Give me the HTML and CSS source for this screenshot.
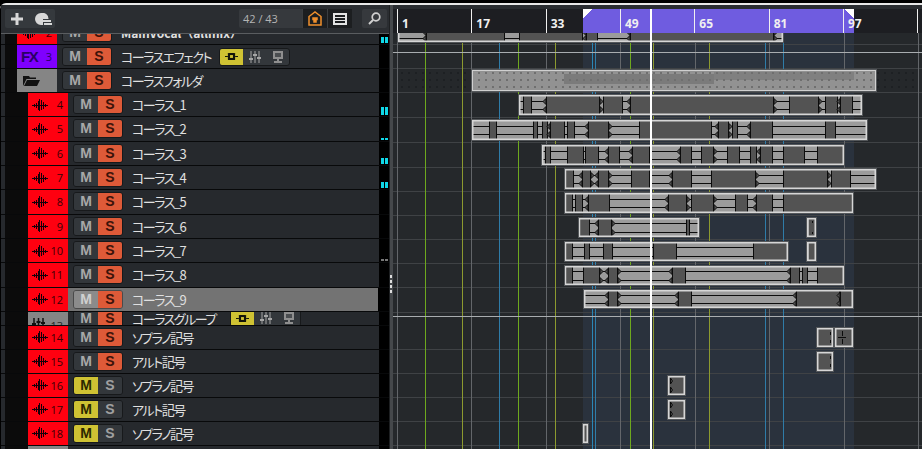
FILE: index.html
```html
<!DOCTYPE html>
<html lang="ja">
<head>
    <meta charset="UTF-8">
    <title>Project</title>
    <link rel="stylesheet" href="styles.css">
</head>
<body>
    <svg class="defs" width="0" height="0">
        <symbol id="wave" viewBox="0 0 16 12">
            <path d="M0 6.500h16M2.500 5v3M4.500 4v5M6.500 2v9M7.500 0v12M9.500 1v10M11.500 3v7M13.500 5v3" stroke="#14000a" stroke-width="1" fill="none"/>
        </symbol>
        <symbol id="chan" viewBox="0 0 18 12">
            <rect x="4" y="1" width="10" height="10" rx="1" fill="#14150a"/>
            <rect x="7" y="4" width="4" height="4" fill="#cfc233"/>
            <path d="M0 6h4M14 6h4" stroke="#14150a" stroke-width="1.500"/>
        </symbol>
        <symbol id="faders" viewBox="0 0 12 12">
            <path d="M2 0v12M6 0v12M10 0v12" stroke="#a5a5a5"/>
            <path d="M0 7h4v2H0zM4 3h4v2H4zM8 6h4v2H8z" fill="#a5a5a5"/>
        </symbol>
        <symbol id="screen" viewBox="0 0 12 12">
            <path d="M1 0h10v8H1zM5 8h2v2H5zM2 10h8v2H2z" fill="#8f8f8f"/>
            <path d="M3 2h6v4H3z" fill="#4a4d50"/>
        </symbol>
    </svg>

    <div class="app">
        <div class="tracks">
            <div class="toolbar">
                <div class="tool-group">
                    <svg width="12" height="12" viewBox="0 0 12 12"><path d="M4.500 0h3v4.500H12v3H7.500V12h-3V7.500H0v-3h4.500z" fill="#d8d8d8"/></svg>
                    <svg width="17" height="12" viewBox="0 0 17 12"><path d="M6 0a6 6 0 0 0 0 12h2V9h8V7H8V6h5.500A6 6 0 0 0 6 0zM9 10h8v2H9z" fill="#d8d8d8"/></svg>
                </div>
                <div class="counter">
                    <span class="count-text">42 / 43</span>
                    <span class="count-btn">
                        <svg width="14" height="15" viewBox="0 0 14 15"><path d="M1 14V5.500L7 1l6 4.500V14zM5 7h1.500v1.500H5zM7.500 7H9v1.500H7.500zM6 9.500h2V11H6z" fill="none" stroke="#f0902c" stroke-width="1.500"/></svg>
                    </span>
                    <span class="count-btn">
                        <svg width="14" height="12" viewBox="0 0 14 12"><path d="M0 0h14v12H0zM2 2v2h10V2zM2 5v2h10V5zM2 8v2h10V8z" fill="#e4e4e4" fill-rule="evenodd"/></svg>
                    </span>
                </div>
                <div class="search-btn">
                    <svg width="13" height="13" viewBox="0 0 13 13"><circle cx="8" cy="5" r="3.800" fill="none" stroke="#d0d0d0" stroke-width="1.700"/><path d="M5 8l-4 4" stroke="#d0d0d0" stroke-width="2"/></svg>
                </div>
            </div>

            <div class="list">
                <div class="row row-cut">
                    <span class="gutter"></span>
                    <span class="strip red"><svg class="wave"><use href="#wave"/></svg><b class="num">2</b></span>
                    <span class="ms"><i class="m">M</i><i class="s">S</i></span>
                    <span class="name bold">MainVocal（allmix）</span>
                    <span class="meter"><i class="lit h6"></i></span>
                </div>
                <div class="row">
                    <span class="gutter"></span>
                    <span class="strip purple"><span class="fx">FX</span><b class="num">3</b></span>
                    <span class="ms"><i class="m">M</i><i class="s">S</i></span>
                    <span class="name name-fixed">コーラスエフェクト</span>
                    <span class="chips">
                        <i class="chip on"><svg width="13" height="9"><use href="#chan"/></svg></i>
                        <i class="chip"><svg width="12" height="12"><use href="#faders"/></svg></i>
                        <i class="chip"><svg width="12" height="12"><use href="#screen"/></svg></i>
                    </span>
                    <span class="meter"></span>
                </div>
                <div class="row">
                    <span class="gutter"></span>
                    <span class="strip grey">
                        <svg class="folder" width="17" height="11" viewBox="0 0 17 11"><path d="M0 1h6l1 1.500h6V4H3.500L0 11zM4 5h13l-3 6H1z" fill="#111"/></svg>
                    </span>
                    <span class="ms"><i class="m">M</i><i class="s">S</i></span>
                    <span class="name">コーラスフォルダ</span>
                    <span class="meter"></span>
                </div>
                <div class="row sub">
                    <span class="gutter"></span>
                    <span class="strip red"><svg class="wave"><use href="#wave"/></svg><b class="num">4</b></span>
                    <span class="ms"><i class="m">M</i><i class="s">S</i></span>
                    <span class="name">コーラス_1</span>
                    <span class="meter"><i class="lit h8"></i></span>
                </div>
                <div class="row sub">
                    <span class="gutter"></span>
                    <span class="strip red"><svg class="wave"><use href="#wave"/></svg><b class="num">5</b></span>
                    <span class="ms"><i class="m">M</i><i class="s">S</i></span>
                    <span class="name">コーラス_2</span>
                    <span class="meter"><i class="lit h2"></i></span>
                </div>
                <div class="row sub">
                    <span class="gutter"></span>
                    <span class="strip red"><svg class="wave"><use href="#wave"/></svg><b class="num">6</b></span>
                    <span class="ms"><i class="m">M</i><i class="s">S</i></span>
                    <span class="name">コーラス_3</span>
                    <span class="meter"><i class="lit h6"></i></span>
                </div>
                <div class="row sub">
                    <span class="gutter"></span>
                    <span class="strip red"><svg class="wave"><use href="#wave"/></svg><b class="num">7</b></span>
                    <span class="ms"><i class="m">M</i><i class="s">S</i></span>
                    <span class="name">コーラス_4</span>
                    <span class="meter"><i class="lit h6"></i></span>
                </div>
                <div class="row sub">
                    <span class="gutter"></span>
                    <span class="strip red"><svg class="wave"><use href="#wave"/></svg><b class="num">8</b></span>
                    <span class="ms"><i class="m">M</i><i class="s">S</i></span>
                    <span class="name">コーラス_5</span>
                    <span class="meter"></span>
                </div>
                <div class="row sub">
                    <span class="gutter"></span>
                    <span class="strip red"><svg class="wave"><use href="#wave"/></svg><b class="num">9</b></span>
                    <span class="ms"><i class="m">M</i><i class="s">S</i></span>
                    <span class="name">コーラス_6</span>
                    <span class="meter"></span>
                </div>
                <div class="row sub">
                    <span class="gutter"></span>
                    <span class="strip red"><svg class="wave"><use href="#wave"/></svg><b class="num">10</b></span>
                    <span class="ms"><i class="m">M</i><i class="s">S</i></span>
                    <span class="name">コーラス_7</span>
                    <span class="meter"><i class="lit h2 dim"></i></span>
                </div>
                <div class="row sub">
                    <span class="gutter"></span>
                    <span class="strip red"><svg class="wave"><use href="#wave"/></svg><b class="num">11</b></span>
                    <span class="ms"><i class="m">M</i><i class="s">S</i></span>
                    <span class="name">コーラス_8</span>
                    <span class="meter"></span>
                </div>
                <div class="row sub selected">
                    <span class="gutter"></span>
                    <span class="strip red"><svg class="wave"><use href="#wave"/></svg><b class="num">12</b></span>
                    <span class="ms"><i class="m">M</i><i class="s">S</i></span>
                    <span class="name">コーラス_9</span>
                    <span class="meter"></span>
                </div>
                <div class="row sub row-group">
                    <span class="gutter"></span>
                    <span class="strip grey strip-low"><svg width="13" height="10" viewBox="0 0 13 10"><path d="M2 0v10M6.500 0v10M11 0v10" stroke="#111" stroke-width="1.500"/><path d="M0 5h4v2H0zM4.500 3h4v2h-4zM9 4h4v2H9z" fill="#111"/></svg><b class="num">13</b></span>
                    <span class="ms"><i class="m">M</i><i class="s">S</i></span>
                    <span class="name name-fixed">コーラスグループ</span>
                    <span class="chips">
                        <i class="chip on"><svg width="13" height="9"><use href="#chan"/></svg></i>
                        <i class="chip"><svg width="12" height="12"><use href="#faders"/></svg></i>
                        <i class="chip"><svg width="12" height="12"><use href="#screen"/></svg></i>
                    </span>
                    <span class="meter"></span>
                </div>
                <div class="row sub row-low">
                    <span class="gutter"></span>
                    <span class="strip red"><svg class="wave"><use href="#wave"/></svg><b class="num">14</b></span>
                    <span class="ms"><i class="m">M</i><i class="s">S</i></span>
                    <span class="name">ソプラノ記号</span>
                    <span class="meter"></span>
                </div>
                <div class="row sub row-low">
                    <span class="gutter"></span>
                    <span class="strip red"><svg class="wave"><use href="#wave"/></svg><b class="num">15</b></span>
                    <span class="ms"><i class="m">M</i><i class="s">S</i></span>
                    <span class="name">アルト記号</span>
                    <span class="meter"></span>
                </div>
                <div class="row sub row-low">
                    <span class="gutter"></span>
                    <span class="strip red"><svg class="wave"><use href="#wave"/></svg><b class="num">16</b></span>
                    <span class="ms muted"><i class="m">M</i><i class="s">S</i></span>
                    <span class="name">ソプラノ記号</span>
                    <span class="meter"></span>
                </div>
                <div class="row sub row-low">
                    <span class="gutter"></span>
                    <span class="strip red"><svg class="wave"><use href="#wave"/></svg><b class="num">17</b></span>
                    <span class="ms muted"><i class="m">M</i><i class="s">S</i></span>
                    <span class="name">アルト記号</span>
                    <span class="meter"></span>
                </div>
                <div class="row sub row-low">
                    <span class="gutter"></span>
                    <span class="strip red"><svg class="wave"><use href="#wave"/></svg><b class="num">18</b></span>
                    <span class="ms muted"><i class="m">M</i><i class="s">S</i></span>
                    <span class="name">ソプラノ記号</span>
                    <span class="meter"></span>
                </div>
                <div class="row sub row-low">
                    <span class="gutter"></span>
                    <span class="strip grey"></span>
                    <span class="meter"></span>
                </div>
            </div>
        </div>

        <div class="divider"><i></i><i></i><i></i><i></i></div>

        <div class="arrange">
            <div class="ruler">
                <div class="cycle"></div>
                <div class="bar">1</div>
                <div class="bar">17</div>
                <div class="bar">33</div>
                <div class="bar">49</div>
                <div class="bar">65</div>
                <div class="bar">81</div>
                <div class="bar">97</div>
                <div class="bar"></div>
                <div class="playhead"></div>
            </div>
            <svg id="lanes" class="lanes" viewBox="393 33 529 416" width="529" height="416"></svg>
        </div>
    </div>
    <script src="script.js"></script>
</body>
</html>
```

FILE: styles.css
```css
* {
    box-sizing: border-box;
}
body {
    margin: 0;
    background-color: #000;
    overflow: hidden;
    font-family: "Noto Sans CJK JP", "Liberation Sans", sans-serif;
}
i {
    font-style: normal;
}
.defs {
    display: block;
    height: 0;
}
.app {
    display: flex;
    height: 446px;
    margin-top: 3px;
    padding-left: 1px;
    border-top: 2px solid #e8e8e8;
    border-top-left-radius: 6px;
    background-color: #000;
}

/* colonne des pistes */
.tracks {
    width: 388px;
    display: flex;
    flex-direction: column;
    background-color: #26292d;
}
.toolbar {
    height: 29px;
    flex: none;
    display: flex;
    align-items: center;
    padding: 0 2px 1px 4px;
    border-bottom: 1px solid #5a5d60;
    border-top-left-radius: 5px;
    background-color: #2a2d31;
}
.tool-group {
    width: 50px;
    height: 19px;
    display: flex;
    align-items: center;
    gap: 12px;
    padding-left: 6px;
    background-color: #35393d;
    border-radius: 2px;
}
.counter {
    display: flex;
    height: 19px;
    margin-left: 184px;
    background-color: #36393d;
    border-radius: 2px;
}
.count-text {
    width: 63px;
    padding-left: 4px;
    font-family: "Open Sans", sans-serif;
    font-size: 11px;
    line-height: 19px;
    color: #b4b4b4;
}
.count-btn {
    width: 25px;
    display: flex;
    align-items: center;
    justify-content: center;
    background-color: #1c1e20;
    border-left: 1px solid #3a3d40;
}
.search-btn {
    width: 25px;
    height: 19px;
    margin-left: 10px;
    display: flex;
    align-items: center;
    justify-content: center;
    background-color: #36393d;
    border-radius: 2px;
}

.list {
    flex: 1;
    overflow: hidden;
}
.row {
    height: 24px;
    display: flex;
    align-items: center;
    padding-left: 4px;
    border-bottom: 1px solid #08090a;
    background-color: #26292d;
}
.sub {
    height: 24.33px;
}
.row-low {
    height: 24px;
}
.row-cut {
    margin-top: -13px;
}
.row-group {
    height: 14px;
    overflow: hidden;
}
.selected {
    background: linear-gradient(90deg, #26292d 4px, #737373 4px, #737373 377px, #000 377px);
}
.gutter {
    width: 12px;
    height: 100%;
    flex: none;
    background-color: #0b0b0b;
}
.sub .gutter {
    width: 23px;
}
.strip {
    width: 40px;
    height: 100%;
    flex: none;
    display: flex;
    align-items: center;
    padding-left: 4px;
    font-size: 12px;
}
.red {
    background-color: #ff0010;
}
.purple {
    background-color: #7f00ff;
}
.grey {
    background-color: #858585;
}
.strip-low {
    align-items: flex-start;
    padding-top: 6px;
    overflow: hidden;
}
.wave {
    width: 16px;
    height: 12px;
    flex: none;
}
.folder {
    margin-left: 2px;
}
.fx {
    font-family: "Liberation Sans", sans-serif;
    font-size: 15px;
    font-weight: bold;
    letter-spacing: -1.5px;
    color: #2a0066;
}
.num {
    margin-left: auto;
    padding-right: 5px;
    font-family: "Open Sans", sans-serif;
    font-size: 11px;
    font-weight: 400;
    color: #3b0006;
}
.purple .num {
    color: #2a0066;
}
.strip-low .num {
    color: #222;
}

.ms {
    width: 50px;
    height: 19px;
    flex: none;
    display: flex;
    margin-left: 5px;
    border: 1px solid #17191b;
    border-radius: 3px;
    overflow: hidden;
    font-family: "Liberation Sans", sans-serif;
    font-size: 14px;
    font-weight: bold;
    line-height: 17px;
    text-align: center;
}
.ms i {
    width: 24px;
}
.m {
    background-color: #33373b;
    color: #a8a8a8;
}
.s {
    background-color: #de5a38;
    color: #3c130a;
}
.selected .ms {
    border-color: #4a4a4a;
}
.selected .m {
    background-color: #8b8b8b;
    color: #d0d0d0;
}
.muted .m {
    background-color: #cfc233;
    color: #2c2800;
}
.muted .s {
    background-color: #33373b;
    color: #a0a0a0;
}
.name {
    margin-left: 9px;
    font-size: 13px;
    font-feature-settings: "palt";
    letter-spacing: -1.5px;
    color: #e0e0e0;
    white-space: nowrap;
}
.name-fixed {
    width: 98px;
    flex: none;
}
.bold {
    font-size: 12px;
    font-weight: bold;
    font-feature-settings: normal;
    letter-spacing: 0;
}
.chips {
    display: flex;
    height: 18px;
    border: 1px solid #17191b;
    border-radius: 3px;
    overflow: hidden;
    background-color: #33373b;
}
.chip {
    width: 23px;
    display: flex;
    align-items: center;
    justify-content: center;
}
.chip.on {
    background-color: #cfc233;
}
.meter {
    width: 10px;
    height: 100%;
    flex: none;
    margin-left: auto;
    display: flex;
    align-items: flex-end;
    padding: 0 1px 1px 2px;
    background-color: #000;
}
.lit {
    width: 7px;
    background: linear-gradient(90deg, #0fd8e8 3px, #000 3px, #000 4px, #0fd8e8 4px);
}
.dim {
    background: linear-gradient(90deg, #777 3px, #000 3px, #000 4px, #777 4px);
}
.h2 {
    height: 2px;
}
.h6 {
    height: 6px;
}
.h8 {
    height: 8px;
}

.divider {
    width: 4px;
    display: flex;
    flex-direction: column;
    gap: 2px;
    padding: 270px 0 0 1px;
    background: linear-gradient(90deg, #1e2022 1px, #45484b 1px);
}
.divider i {
    width: 2px;
    height: 3px;
    background-color: #ddd;
}

/* zone de droite */
.arrange {
    flex: 1;
    padding-top: 4px;
    background-color: #2a2d31;
    overflow: hidden;
}
.ruler {
    position: relative;
    height: 24px;
    display: flex;
    padding-left: 4px;
    background-color: #1d1e22;
}
.cycle {
    position: absolute;
    top: 0;
    bottom: 0;
    left: 190px;
    width: 271px;
    background:
        linear-gradient(135deg, #fff 6.4px, transparent 6.4px) left top / 9px 9px no-repeat,
        linear-gradient(225deg, #fff 6.4px, transparent 6.4px) right top / 9px 9px no-repeat,
        #6f5ce0;
}
.bar {
    position: relative;
    width: 74.33px;
    flex: none;
    padding: 6px 0 0 4px;
    border-left: 1px solid #f0f0f0;
    font-family: "Open Sans", sans-serif;
    font-size: 12px;
    font-weight: 700;
    line-height: 18px;
    color: #f0f0f0;
}
.playhead {
    position: absolute;
    top: 0;
    bottom: 0;
    left: 257px;
    width: 2px;
    background-color: #fff;
}
.lanes {
    display: block;
    background-color: #25282b;
}
```

FILE: script.js
```js
// Grille et clips de la zone d'arrangement (coordonnees = pixels de la page)
const lanes = document.getElementById('lanes');
let out = '';

const laneLines = [44, 68, 92, 117, 142, 167, 191, 215, 239, 263, 287, 312, 349, 373, 397, 421, 445];
const bars = [397, 471, 546, 620, 695, 769, 844, 918];
const markers = [
    [425, '#6ea81e'], [462, '#8c9a2f'], [499, '#2f7ca8'], [518, '#6ea81e'], [555, '#8c9a2f'],
    [592, '#2a86b5'], [595, '#2f7ca8'], [630, '#6ea81e'], [653, '#8c9a2f'], [709, '#8c9a2f'],
    [765, '#2f7ca8'], [783, '#2f7ca8']
];

// [x, largeur, haut, bas, segments sombres]
const clips = [
    [398, 385, 28, 42, [[426, 505], [519, 583], [586, 598], [630, 774]]],
    [519, 343, 95, 115, [[523, 532], [546, 600], [603, 623], [630, 774], [789, 819], [825, 838], [840, 853]]],
    [472, 395, 120, 140, [[489, 497], [533, 538], [542, 548], [550, 565], [567, 575], [588, 609], [639, 712], [718, 729], [732, 738], [750, 773], [825, 836]]],
    [542, 302, 145, 165, [[545, 551], [567, 584], [585, 599], [608, 620], [632, 650], [680, 692], [701, 714], [727, 740], [750, 757], [760, 773], [783, 805], [817, 844]]],
    [565, 311, 169, 189, [[566, 574], [582, 591], [598, 609], [631, 650], [672, 692], [711, 756], [783, 828], [831, 851]]],
    [565, 288, 193, 213, [[566, 573], [575, 583], [588, 610], [668, 687], [691, 714], [735, 748], [756, 773], [783, 852]]],
    [579, 120, 218, 237, [[580, 590], [598, 612], [686, 690]]],
    [807, 9, 218, 237, [[809, 816]]],
    [565, 223, 242, 261, [[566, 573], [584, 590], [603, 613], [653, 677], [753, 788]]],
    [807, 9, 242, 261, [[809, 816]]],
    [565, 279, 266, 285, [[566, 573], [583, 600], [608, 618], [672, 686], [790, 800], [802, 808], [817, 844]]],
    [584, 269, 290, 308, [[608, 618], [678, 692], [796, 840], [840, 853]]],
    [817, 16, 328, 347, [[818, 833]]],
    [835, 18, 328, 347, [[836, 853]]],
    [817, 16, 352, 371, [[818, 833]]],
    [668, 17, 376, 395, [[669, 685]]],
    [668, 17, 400, 419, [[669, 685]]],
    [583, 5, 424, 443, [[584, 588]]]
];

// traits noirs dans les petits clips
const ticks = [
    'M670.500 378l2 3-2 3v-6M670.500 387l2 3-2 3v-6',
    'M670.500 402l2 3-2 3v-6M670.500 411l2 3-2 3v-6',
    'M842.500 331v5M838 337.500h8M842.500 339v5',
    'M830.500 332v3M830.500 340v3',
    'M830.500 356v3M830.500 364v3',
    'M812.500 221v2M812.500 232v2'
];

function line(x1, y1, x2, y2, color) {
    return `<line x1="${x1}" y1="${y1}" x2="${x2}" y2="${y2}" stroke="${color}" stroke-width="1"/>`;
}
function rect(x, y, w, h, fill) {
    return `<rect x="${x}" y="${y}" width="${w}" height="${h}" fill="${fill}"/>`;
}
// petite encoche de l'onde sur le bord d'un segment
function notch(x, y, dir) {
    return `<path d="M${x} ${y - 3}L${x + dir * 3} ${y}L${x} ${y + 3}z" fill="#535353" stroke="#0c0c0c" stroke-width="1"/>`;
}

out += `<defs><pattern id="dots" width="7" height="7" patternUnits="userSpaceOnUse"><rect x="2" y="2" width="2" height="2" fill="#6f6f6f"/></pattern>
<pattern id="dotsDark" width="7" height="7" patternUnits="userSpaceOnUse"><rect x="2" y="2" width="2" height="2" fill="#1d2023"/></pattern></defs>`;

out += rect(583, 33, 271, 416, '#2a323d');
laneLines.forEach(y => { out += line(393, y + 0.5, 922, y + 0.5, '#3f4245'); });
bars.forEach(x => { out += line(x + 0.5, 33, x + 0.5, 449, '#63666a'); });
markers.forEach(m => { out += line(m[0] + 0.5, 33, m[0] + 0.5, 449, m[1]); });
out += line(393, 52.5, 922, 52.5, '#a9adb0');
out += line(393, 316.5, 922, 316.5, '#a9adb0');

// piste dossier
out += rect(397, 71, 75, 20, 'url(#dotsDark)') + rect(876, 71, 42, 20, 'url(#dotsDark)');
out += rect(471, 69, 406, 23, '#55585b') + rect(472, 70, 404, 21, '#929292');
out += rect(564, 74, 150, 10, '#7b7b7b') + rect(714, 72, 140, 8, '#808080');
out += rect(472, 70, 404, 21, 'url(#dots)');
out += `<rect x="472.500" y="70.500" width="403" height="20" fill="none" stroke="#d0d0d0"/>`;

clips.forEach(c => {
    const [x, w, top, bottom, dark] = c;
    const h = bottom - top;
    out += rect(x - 1, top - 1, w + 2, h + 2, '#55585b');
    out += rect(x, top, w, h, '#9b9b9b');
    const y1 = Math.round(top + h * 0.28) + 0.5;
    const y2 = Math.round(top + h * 0.72) + 0.5;
    if (w > 10) {
        out += line(x, y1, x + w, y1, '#0c0c0c') + line(x, y2, x + w, y2, '#0c0c0c');
    }
    dark.forEach(d => {
        out += rect(d[0], top, d[1] - d[0], h, '#535353');
        if (w > 20) {
            out += line(d[0] + 0.5, top, d[0] + 0.5, bottom, '#0c0c0c');
            out += line(d[1] - 0.5, top, d[1] - 0.5, bottom, '#0c0c0c');
        }
        if (d[1] - d[0] > 8 && d[0] > x + 2 && d[0] % 2 === 0 && w > 20) {
            out += notch(d[0], y1, -1) + notch(d[0], y2, -1);
        }
        if (d[1] - d[0] > 8 && d[1] < x + w - 3 && d[1] % 3 === 0 && w > 20) {
            out += notch(d[1], y1, 1) + notch(d[1], y2, 1);
        }
    });
    out += `<rect x="${x + 0.75}" y="${top + 0.75}" width="${w - 1.5}" height="${h - 1.5}" fill="none" stroke="#d6d6d6" stroke-width="1.500"/>`;
});
ticks.forEach(d => {
    out += `<path d="${d}" fill="none" stroke="#0c0c0c" stroke-width="1"/>`;
});

// curseur de lecture
out += rect(650, 33, 2, 416, '#fff');

lanes.innerHTML = out;
```
